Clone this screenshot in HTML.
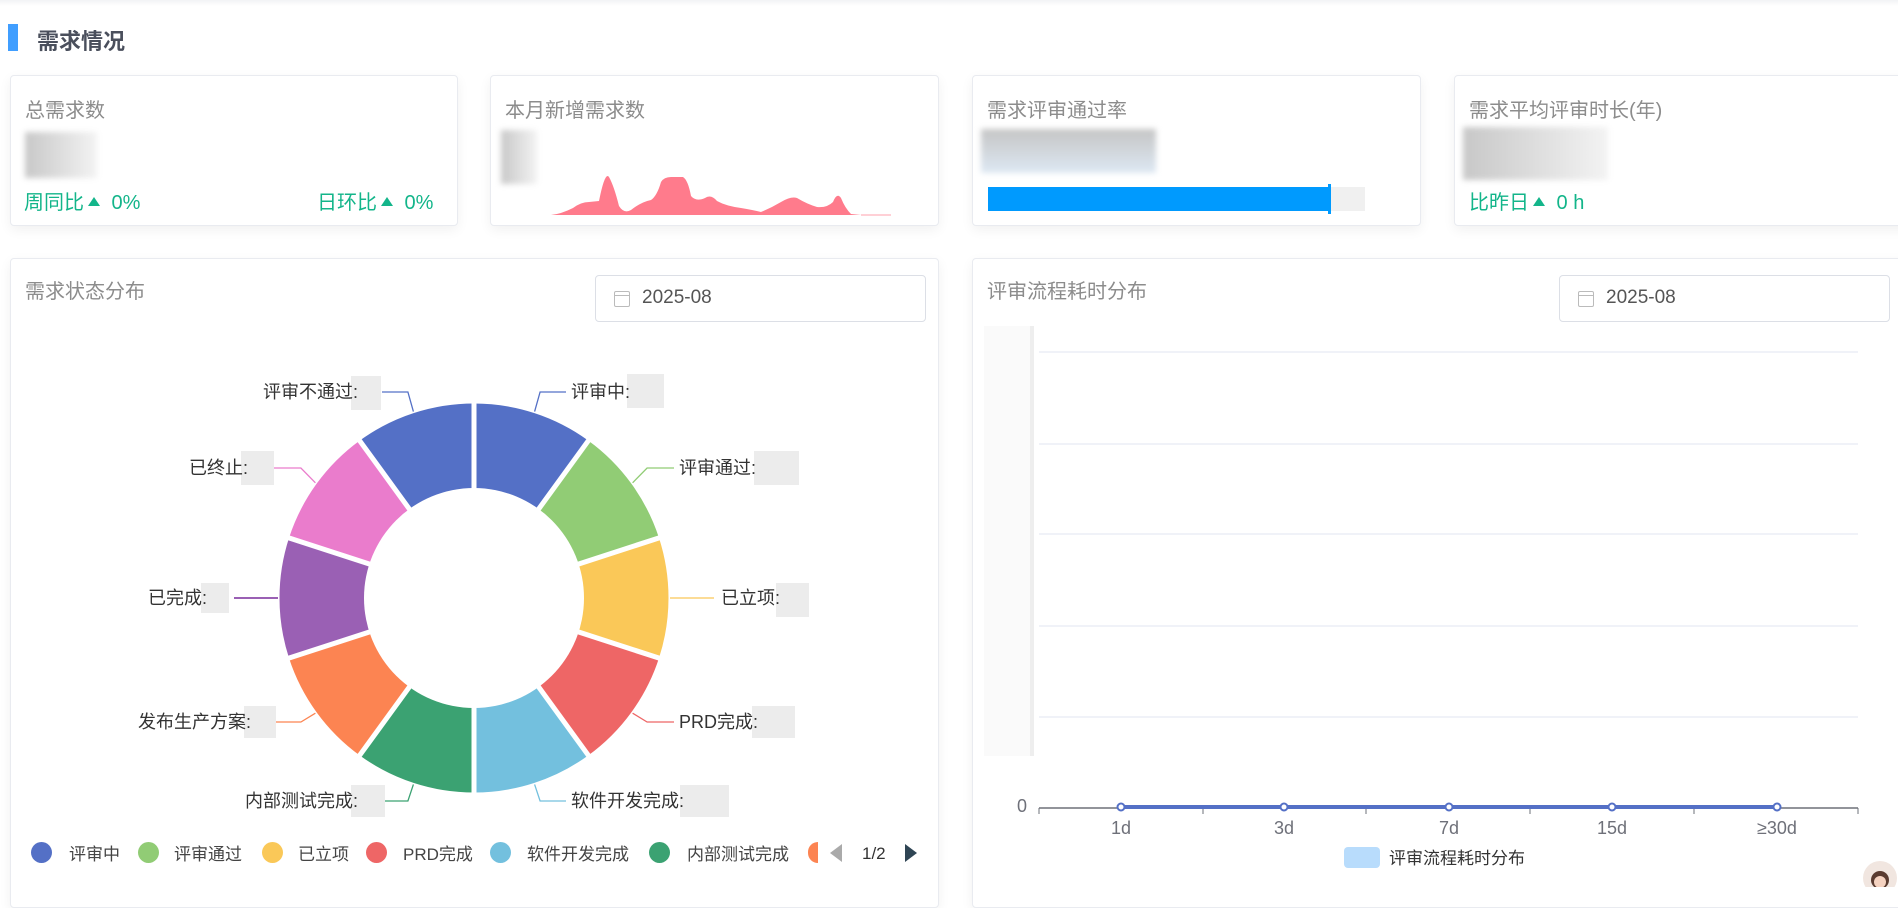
<!DOCTYPE html>
<html><head><meta charset="utf-8"><style>
*{margin:0;padding:0;box-sizing:border-box}
body{width:1898px;height:887px;overflow:hidden;background:#fff;font-family:"Liberation Sans","Noto Sans CJK SC",sans-serif;position:relative}
.abs{position:absolute}
.card{position:absolute;background:#fff;border:1px solid #e9ebf0;border-radius:4px;box-shadow:0 4px 12px rgba(0,0,0,.06)}
.ct{position:absolute;left:14px;top:18px;font-size:20px;color:#8c8c8c}
.blur{position:absolute;background:linear-gradient(90deg,#c8c8c8,#e6e6e6 70%,#f3f3f3);filter:blur(3px)}
.g{color:#13b58a;font-size:20px;position:absolute}
.tri{display:inline-block;width:0;height:0;border-left:6px solid transparent;border-right:6px solid transparent;border-bottom:9px solid #13b58a;margin:0 6px 3px 4px}
.date{position:absolute;border:1px solid #dcdfe6;border-radius:4px;width:331px;height:47px;font-size:19px;color:#555;padding:11px 0 0 46px}
.date i{position:absolute;left:18px;top:15px;width:16px;height:16px;border:1.5px solid #bbb;border-radius:2px}
.date i:before{content:"";position:absolute;left:0;right:0;top:3px;border-top:1.5px solid #bbb}
.lg{position:absolute;top:840px;font-size:17px;color:#444}
.lg b{position:absolute;left:0;top:2px;width:21px;height:21px;border-radius:50%}
</style></head><body>
<div class="abs" style="left:0;top:0;width:1898px;height:6px;background:linear-gradient(#f2f3f5,#fff)"></div>
<div class="abs" style="left:8px;top:24px;width:10px;height:27px;background:#409eff"></div>
<div class="abs" style="left:37px;top:24px;font-size:22px;font-weight:bold;color:#4a4f5c">需求情况</div>

<div class="card" style="left:10px;top:75px;width:448px;height:151px">
 <div class="ct">总需求数</div>
 <div class="blur" style="left:14px;top:56px;width:72px;height:46px"></div>
 <div class="g" style="left:13px;top:110px">周同比<span class="tri"></span> 0%</div>
 <div class="g" style="left:306px;top:110px">日环比<span class="tri"></span> 0%</div>
</div>
<div class="card" style="left:490px;top:75px;width:449px;height:151px">
 <div class="ct">本月新增需求数</div>
 <div class="blur" style="left:10px;top:54px;width:36px;height:54px"></div>
 <svg class="abs" style="left:0;top:0" width="449" height="151"><path d="M60 139 Q70 138 82 132 Q90 126 98 126 L108 125 Q114 95 118 101 Q123 110 128 130 Q133 138 140 134 Q150 126 160 124 Q166 120 170 106 Q173 101 180 101 L192 101 Q197 104 200 120 Q205 126 214 122 Q220 118 226 125 Q235 130 250 132 Q262 134 270 136 Q280 132 290 126 Q300 120 306 122 Q316 128 326 131 Q336 132 342 126 Q346 116 350 122 Q354 132 360 138 L370 139 Z" fill="#ff7b8c"/><path d="M370 139 L400 139" stroke="#ffd0d6" stroke-width="2"/></svg>
</div>
<div class="card" style="left:972px;top:75px;width:449px;height:151px">
 <div class="ct">需求评审通过率</div>
 <div class="blur" style="left:8px;top:53px;width:175px;height:44px;background:linear-gradient(180deg,#c5c5c5,#dde8f3)"></div>
 <div class="abs" style="left:15px;top:111px;width:377px;height:24px;background:#f0f0f0"></div>
 <div class="abs" style="left:15px;top:111px;width:342px;height:24px;background:#009afe"></div>
 <div class="abs" style="left:355px;top:108px;width:3px;height:30px;background:#009afe"></div>
</div>
<div class="card" style="left:1454px;top:75px;width:460px;height:151px">
 <div class="ct">需求平均评审时长(年)</div>
 <div class="blur" style="left:8px;top:51px;width:145px;height:53px"></div>
 <div class="g" style="left:14px;top:110px">比昨日<span class="tri"></span> 0 h</div>
</div>

<div class="card" style="left:10px;top:258px;width:929px;height:650px">
 <div class="ct" style="top:16px">需求状态分布</div>
 <div class="date" style="left:584px;top:16px"><i></i>2025-08</div>
</div>
<div class="card" style="left:972px;top:258px;width:940px;height:650px">
 <div class="ct" style="top:16px">评审流程耗时分布</div>
 <div class="date" style="left:586px;top:16px"><i></i>2025-08</div>
</div>

<svg class="abs" style="left:0;top:0" width="1898" height="887" font-family="Liberation Sans,Noto Sans CJK SC,sans-serif">
 <g transform="translate(474,598)" fill="none" stroke-width="85">
  <circle r="152" stroke="#5470c6" stroke-dasharray="95.5 1000" transform="rotate(-90)"/>
  <circle r="152" stroke="#91cc75" stroke-dasharray="95.5 1000" transform="rotate(-54)"/>
  <circle r="152" stroke="#fac858" stroke-dasharray="95.5 1000" transform="rotate(-18)"/>
  <circle r="152" stroke="#ee6666" stroke-dasharray="95.5 1000" transform="rotate(18)"/>
  <circle r="152" stroke="#73c0de" stroke-dasharray="95.5 1000" transform="rotate(54)"/>
  <circle r="152" stroke="#3ba272" stroke-dasharray="95.5 1000" transform="rotate(90)"/>
  <circle r="152" stroke="#fc8452" stroke-dasharray="95.5 1000" transform="rotate(126)"/>
  <circle r="152" stroke="#9a60b4" stroke-dasharray="95.5 1000" transform="rotate(162)"/>
  <circle r="152" stroke="#ea7ccc" stroke-dasharray="95.5 1000" transform="rotate(198)"/>
  <circle r="152" stroke="#5470c6" stroke-dasharray="95.5 1000" transform="rotate(234)"/>
  <g stroke="#fff" stroke-width="5">
   <line x1="0" y1="0" x2="0" y2="-200"/><line x1="0" y1="0" x2="117.6" y2="-161.8"/><line x1="0" y1="0" x2="190.2" y2="-61.8"/><line x1="0" y1="0" x2="190.2" y2="61.8"/><line x1="0" y1="0" x2="117.6" y2="161.8"/><line x1="0" y1="0" x2="0" y2="200"/><line x1="0" y1="0" x2="-117.6" y2="161.8"/><line x1="0" y1="0" x2="-190.2" y2="61.8"/><line x1="0" y1="0" x2="-190.2" y2="-61.8"/><line x1="0" y1="0" x2="-117.6" y2="-161.8"/>
  </g>
  <circle r="110" fill="#fff" stroke="none"/>
  <g stroke-width="1.3">
   <polyline points="60.6,-186.4 66.1,-206 92,-206" stroke="#5470c6"/>
   <polyline points="158.6,-115.2 173.1,-130 200,-130" stroke="#91cc75"/>
   <polyline points="196,0 240,0" stroke="#fac858"/>
   <polyline points="158.6,115.2 173.1,124 200,124" stroke="#ee6666"/>
   <polyline points="60.6,186.4 66.1,203 92,203" stroke="#73c0de"/>
   <polyline points="-60.6,186.4 -66.1,203 -92,203" stroke="#3ba272"/>
   <polyline points="-158.6,115.2 -173.1,124 -200,124" stroke="#fc8452"/>
   <polyline points="-196,0 -240,0" stroke="#9a60b4" stroke-width="2"/>
   <polyline points="-158.6,-115.2 -173.1,-130 -200,-130" stroke="#ea7ccc"/>
   <polyline points="-60.6,-186.4 -66.1,-206 -92,-206" stroke="#5470c6"/>
  </g>
 </g>
 <g fill="#ececec">
  <rect x="627" y="374" width="37" height="34"/><rect x="754" y="451" width="45" height="34"/><rect x="776" y="583" width="33" height="34"/><rect x="752" y="706" width="43" height="32"/><rect x="680" y="785" width="49" height="32"/>
  <rect x="351" y="785" width="34" height="32"/><rect x="244" y="706" width="32" height="32"/><rect x="201" y="583" width="28" height="30"/><rect x="241" y="451" width="33" height="34"/><rect x="351" y="376" width="30" height="34"/>
 </g>
 <g font-size="18" fill="#333">
  <text x="571" y="398">评审中:</text><text x="679" y="474">评审通过:</text><text x="721" y="604">已立项:</text><text x="679" y="728">PRD完成:</text><text x="571" y="807">软件开发完成:</text>
  <g text-anchor="end"><text x="358" y="807">内部测试完成:</text><text x="251" y="728">发布生产方案:</text><text x="207" y="604">已完成:</text><text x="248" y="474">已终止:</text><text x="358" y="398">评审不通过:</text></g>
 </g>
 <!-- right chart -->
 <rect x="984" y="326" width="50" height="430" fill="#fafafa"/>
 <rect x="1030" y="326" width="4" height="430" fill="#eeeeee"/>
 <g stroke="#e0e6f1" stroke-width="1"><line x1="1039" y1="352" x2="1858" y2="352"/><line x1="1039" y1="444" x2="1858" y2="444"/><line x1="1039" y1="534" x2="1858" y2="534"/><line x1="1039" y1="626" x2="1858" y2="626"/><line x1="1039" y1="717" x2="1858" y2="717"/></g>
 <line x1="1039" y1="808" x2="1858" y2="808" stroke="#6e7079" stroke-width="1.5"/>
 <g stroke="#6e7079"><line x1="1039" y1="808" x2="1039" y2="814"/><line x1="1203" y1="808" x2="1203" y2="814"/><line x1="1366" y1="808" x2="1366" y2="814"/><line x1="1530" y1="808" x2="1530" y2="814"/><line x1="1694" y1="808" x2="1694" y2="814"/><line x1="1858" y1="808" x2="1858" y2="814"/></g>
 <line x1="1121" y1="807" x2="1777" y2="807" stroke="#5470c6" stroke-width="4"/>
 <g fill="#fff" stroke="#5470c6" stroke-width="2"><circle cx="1121" cy="807" r="3.5"/><circle cx="1284" cy="807" r="3.5"/><circle cx="1449" cy="807" r="3.5"/><circle cx="1612" cy="807" r="3.5"/><circle cx="1777" cy="807" r="3.5"/></g>
 <g font-size="18" fill="#6e7079" text-anchor="middle"><text x="1022" y="812">0</text><text x="1121" y="834">1d</text><text x="1284" y="834">3d</text><text x="1449" y="834">7d</text><text x="1612" y="834">15d</text><text x="1777" y="834">≥30d</text></g>
 <rect x="1344" y="847" width="36" height="21" rx="4" fill="#b8dcfc"/>
 <text x="1389" y="864" font-size="17" fill="#333">评审流程耗时分布</text>
 <path d="M842 844 L830 853 L842 862 Z" fill="#aaa"/>
 <text x="862" y="859" font-size="17" fill="#333">1/2</text>
 <path d="M905 844 L917 853 L905 862 Z" fill="#2f4554"/>
 <circle cx="1880" cy="878" r="17" fill="#f1e6e0"/><circle cx="1880" cy="880" r="9" fill="#5a3b30"/><circle cx="1880" cy="882" r="6" fill="#f5d2c0"/>
</svg>
<div class="lg" style="left:31px;padding-left:38px"><b style="background:#5470c6"></b>评审中</div>
<div class="lg" style="left:138px;padding-left:36px"><b style="background:#91cc75"></b>评审通过</div>
<div class="lg" style="left:262px;padding-left:36px"><b style="background:#fac858"></b>已立项</div>
<div class="lg" style="left:366px;padding-left:37px"><b style="background:#ee6666"></b>PRD完成</div>
<div class="lg" style="left:490px;padding-left:37px"><b style="background:#73c0de"></b>软件开发完成</div>
<div class="lg" style="left:649px;padding-left:38px"><b style="background:#3ba272"></b>内部测试完成</div>
<div class="abs" style="left:808px;top:842px;width:10px;height:21px;border-radius:10px 0 0 10px;background:#fc8452"></div>
</body></html>
